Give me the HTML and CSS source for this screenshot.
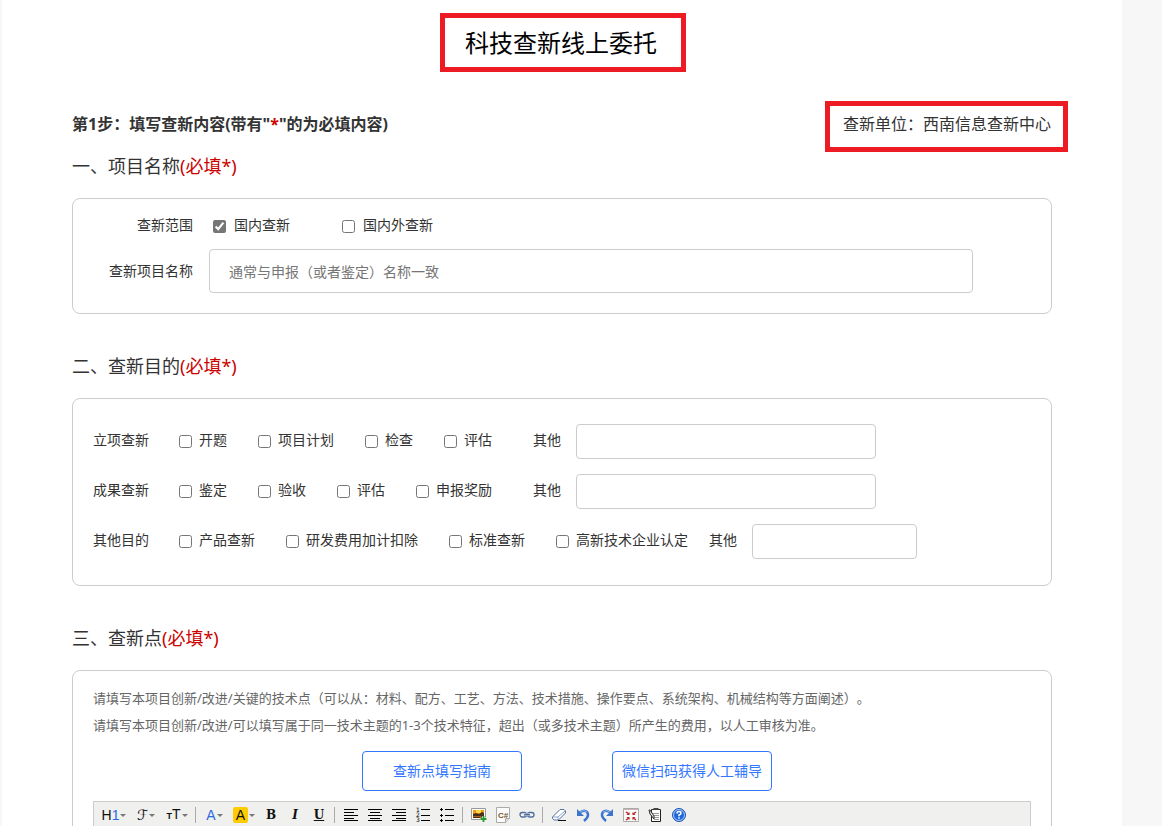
FILE: index.html
```html
<!DOCTYPE html>
<html lang="zh-CN">
<head>
<meta charset="utf-8">
<title>科技查新线上委托</title>
<link rel="stylesheet" href="styles.css">
</head>
<body>
<main class="page">
  <header class="title-row"><h1 class="title">科技查新线上委托</h1></header>
  <div class="step-row">
    <p class="step">第1步：填写查新内容(带有"<span class="required">*</span>"的为必填内容)</p>
    <p class="unit">查新单位：西南信息查新中心</p>
  </div>

  <section class="section">
    <h2 class="heading">一、项目名称<span class="required">(必填*)</span></h2>
    <div class="panel panel-name">
      <div class="name-row scope-row">
        <span class="name-label">查新范围</span>
        <div class="scopes">
          <label class="choice choice-wide"><input class="tick" type="checkbox" checked>国内查新</label>
          <label class="choice choice-wide"><input class="tick" type="checkbox">国内外查新</label>
        </div>
      </div>
      <div class="name-row">
        <label class="name-label" for="project">查新项目名称</label>
        <input class="field project" id="project" type="text" placeholder="通常与申报（或者鉴定）名称一致">
      </div>
    </div>
  </section>

  <section class="section">
    <h2 class="heading">二、查新目的<span class="required">(必填*)</span></h2>
    <div class="panel panel-purpose">
      <div class="purpose-row">
        <span class="purpose-label">立项查新</span>
        <div class="choices">
          <label class="choice"><input class="tick" type="checkbox">开题</label>
          <label class="choice"><input class="tick" type="checkbox">项目计划</label>
          <label class="choice"><input class="tick" type="checkbox">检查</label>
          <label class="choice"><input class="tick" type="checkbox">评估</label>
        </div>
        <label class="other" for="other1">其他</label>
        <input class="field other-field" id="other1" type="text">
      </div>
      <div class="purpose-row">
        <span class="purpose-label">成果查新</span>
        <div class="choices">
          <label class="choice"><input class="tick" type="checkbox">鉴定</label>
          <label class="choice"><input class="tick" type="checkbox">验收</label>
          <label class="choice"><input class="tick" type="checkbox">评估</label>
          <label class="choice"><input class="tick" type="checkbox">申报奖励</label>
        </div>
        <label class="other" for="other2">其他</label>
        <input class="field other-field" id="other2" type="text">
      </div>
      <div class="purpose-row">
        <span class="purpose-label">其他目的</span>
        <div class="choices">
          <label class="choice"><input class="tick" type="checkbox">产品查新</label>
          <label class="choice"><input class="tick" type="checkbox">研发费用加计扣除</label>
          <label class="choice"><input class="tick" type="checkbox">标准查新</label>
          <label class="choice"><input class="tick" type="checkbox">高新技术企业认定</label>
        </div>
        <label class="other other-near" for="other3">其他</label>
        <input class="field other-field other-short" id="other3" type="text">
      </div>
    </div>
  </section>

  <section class="section">
    <h2 class="heading">三、查新点<span class="required">(必填*)</span></h2>
    <div class="panel panel-points">
      <p class="hint">请填写本项目创新/改进/关键的技术点（可以从：材料、配方、工艺、方法、技术措施、操作要点、系统架构、机械结构等方面阐述）。</p>
      <p class="hint">请填写本项目创新/改进/可以填写属于同一技术主题的1-3个技术特征，超出（或多技术主题）所产生的费用，以人工审核为准。</p>
      <div class="actions">
        <button class="action" type="button">查新点填写指南</button>
        <button class="action" type="button">微信扫码获得人工辅导</button>
      </div>
      <div class="toolbar" role="toolbar" aria-label="编辑器">
        <button class="tool tool-wide" type="button"><span class="glyph">H<span class="blue">1</span></span><span class="caret"></span></button>
        <button class="tool tool-wide" type="button"><span class="glyph script">ℱ</span><span class="caret"></span></button>
        <button class="tool tool-size" type="button"><span class="glyph"><span class="small-t">T</span>T</span><span class="caret"></span></button>
        <span class="divider"></span>
        <button class="tool tool-color" type="button"><span class="glyph blue">A</span><span class="caret"></span></button>
        <button class="tool tool-size" type="button"><span class="glyph marker">A</span><span class="caret"></span></button>
        <button class="tool serif" type="button">B</button>
        <button class="tool serif italic" type="button">I</button>
        <button class="tool serif underline" type="button">U</button>
        <span class="divider"></span>
        <button class="tool" type="button" aria-label="左对齐"><svg class="icon" viewBox="0 0 16 16"><path d="M1 2.5h14M1 5.5h10M1 8.5h14M1 11.5h10M1 13.5h14" stroke="#000"/></svg></button>
        <button class="tool" type="button" aria-label="居中"><svg class="icon" viewBox="0 0 16 16"><path d="M1 2.5h14M3 5.5h10M1 8.5h14M3 11.5h10M1 13.5h14" stroke="#000"/></svg></button>
        <button class="tool" type="button" aria-label="右对齐"><svg class="icon" viewBox="0 0 16 16"><path d="M1 2.5h14M5 5.5h10M1 8.5h14M5 11.5h10M1 13.5h14" stroke="#000"/></svg></button>
        <button class="tool" type="button" aria-label="编号"><svg class="icon" viewBox="0 0 16 16"><path d="M6 2.5h9M6 8.5h9M6 13.5h9" stroke="#000"/><g class="digits"><text x="1" y="5">1</text><text x="1" y="10">2</text><text x="1" y="15">3</text></g></svg></button>
        <button class="tool" type="button" aria-label="项目符号"><svg class="icon" viewBox="0 0 16 16"><path d="M6 2.5h9M6 8.5h9M6 13.5h9" stroke="#000"/><path d="M1 2.500h3M2.500 1v3M1 8.500h3M2.500 7v3M1 13.500h3M2.500 12v3" stroke="#000"/></svg></button>
        <span class="divider"></span>
        <button class="tool" type="button" aria-label="图片"><svg class="icon" viewBox="0 0 16 16"><path d="M.5 1.500h14v11H.5z" fill="#fff" stroke="#999"/><path d="M2 3h11v4H2z" fill="#f49a0b"/><path d="M5 3h5v3H5z" fill="#ffd84a"/><path d="M2 7l3-1 3 1 3-2 2 1v5H2z" fill="#47301b"/><path d="M2 9h8v1H2z" fill="#b15f14"/><path d="M12.500 9v6M9.500 12h6" stroke="#fff" stroke-width="3"/><path d="M12.500 9v6M9.500 12h6" stroke="#2c9b2f" stroke-width="2"/></svg></button>
        <button class="tool" type="button" aria-label="代码"><svg class="icon" viewBox="0 0 16 16"><path d="M1.500.5h13v11l-4 4h-9z" fill="#fafafa" stroke="#aaa"/><path d="M14.500 11.500h-4v4" fill="#ddd" stroke="#aaa"/><text class="code" x="3" y="11">C#</text></svg></button>
        <button class="tool" type="button" aria-label="链接"><svg class="icon" viewBox="0 0 16 16" fill="none"><rect x="1" y="5.500" width="6.500" height="4.500" rx="2.200" stroke="#536f9f" stroke-width="1.300"/><rect x="8.500" y="5.500" width="6.500" height="4.500" rx="2.200" stroke="#536f9f" stroke-width="1.300"/><path d="M5 7.800h6" stroke="#dfe6f4" stroke-width="2.500"/><path d="M5 7.800h6" stroke="#435d8c" stroke-width="1.300"/></svg></button>
        <span class="divider"></span>
        <button class="tool" type="button" aria-label="清除格式"><svg class="icon" viewBox="0 0 16 16"><path d="M9 2.500h4l1.500 1.500v2L7.500 13H3l-1.500-1.500V10z" fill="#fff" stroke="#55719e"/><path d="M1.500 10H7l7-6M7 10v3" fill="none" stroke="#8da5ce"/><path d="M7 13.500h8" stroke="#111"/></svg></button>
        <button class="tool" type="button" aria-label="撤销"><svg class="icon" viewBox="0 0 16 16"><path d="M4 6q5-4 8-1 3 4-3 9" fill="none" stroke="#3d74cd" stroke-width="2.500"/><path d="M2 2v7h7z" fill="#3d74cd"/><path d="M5 5q4-3 7 0" fill="none" stroke="#8eb5f0"/></svg></button>
        <button class="tool" type="button" aria-label="重做"><svg class="icon" viewBox="0 0 16 16"><path d="M12 6Q7 2 4 5q-3 4 3 9" fill="none" stroke="#3d74cd" stroke-width="2.500"/><path d="M14 2v7H7z" fill="#3d74cd"/><path d="M11 5Q7 2 4 5" fill="none" stroke="#8eb5f0"/></svg></button>
        <button class="tool" type="button" aria-label="全屏"><svg class="icon" viewBox="0 0 16 16"><path d="M.5 1.500h15v13H.5z" fill="#fafafa" stroke="#aaa"/><path d="M1 2.500h14" stroke="#c9b5b5"/><path d="M3 5l3 2M13 5l-3 2M3 13l3-2M13 13l-3-2" stroke="#b92525" stroke-width="1.500"/><path d="M6.500 5v3h-3zM9.500 5v3h3zM6.500 13v-3h-3zM9.500 13v-3h3z" fill="#b92525"/></svg></button>
        <button class="tool" type="button" aria-label="模板"><svg class="icon" viewBox="0 0 16 16"><path d="M4.500 2.500h9v12h-9z" fill="#fff" stroke="#222"/><path d="M6.500 2h5" stroke="#444" stroke-width="2"/><path d="M6 6.500h6M6 8.500h6M7 10.500h5M7 12.500h5" stroke="#999"/><path d="M2 3l1 4 4 5V9L3 3z" fill="#ddd" stroke="#333"/></svg></button>
        <button class="tool" type="button" aria-label="帮助"><svg class="icon" viewBox="0 0 16 16"><circle cx="8" cy="8" r="6.500" fill="#1f68dc" stroke="#1d55b5"/><circle cx="8" cy="8" r="5.500" fill="none" stroke="#d7e6ff" stroke-width=".8"/><path d="M6 6.500Q6 4.500 8 4.500t2 1.700Q10 7.200 8 8v1.300M8 10.300v1.500" fill="none" stroke="#fff" stroke-width="1.500"/></svg></button>
      </div>
    </div>
  </section>
</main>
</body>
</html>
```
FILE: styles.css
```css
* { box-sizing: border-box; }

body {
  margin: 0;
  height: 100vh;
  overflow: hidden;
  background: #f7f7f7;
  color: #333;
  font: 14px/30px "Noto Sans", "Noto Sans CJK SC", sans-serif;
  text-spacing-trim: space-all;
}

h1, h2, p { margin: 0; font-weight: 400; }

input, button { font: inherit; color: inherit; }

.page {
  min-height: 100vh;
  margin: 0 40px 0 2px;
  padding: 13px 70px 0;
  background: #fff;
}

.title-row { display: flex; justify-content: center; padding-left: 2px; }

.title {
  padding: 0 24px 0 20px;
  border: 5px solid #ed1c24;
  color: #000;
  font-size: 24px;
  line-height: 49px;
}

.step-row {
  display: flex;
  justify-content: space-between;
  align-items: flex-start;
  margin: 29px -16px 0 0;
  font-size: 16px;
  line-height: 36px;
}

.step { padding-top: 5px; font-weight: 700; }

.unit {
  padding: 0 12px 5px 13px;
  border: 5px solid #ed1c24;
}

.required { color: #c00; }

.section + .section { margin-top: 38px; }

.heading {
  margin-bottom: 18px;
  font-size: 18px;
  line-height: 28px;
}

.panel {
  border: 1px solid #ccc;
  border-radius: 8px;
}

.panel-name { padding: 12px 20px 20px; }

.name-row { display: flex; align-items: center; gap: 16px; }

.scope-row { margin-bottom: 10px; line-height: 28px; }

.name-label { flex: 0 0 100px; text-align: right; }

.scopes { display: flex; gap: 52px; padding-left: 4px; }

.choice { display: flex; align-items: center; gap: 7px; white-space: nowrap; }

.choice-wide { gap: 8px; }

.tick { flex: none; width: 13px; height: 13px; margin: 3px 0 0; accent-color: #767676; }

.field {
  min-width: 0;
  border: 1px solid #ccc;
  border-radius: 4px;
  background: #fff;
}

.field::placeholder { color: #757575; }

.project { flex: 1; height: 44px; margin-right: 58px; padding: 0 19px; }

.panel-purpose {
  display: flex;
  flex-direction: column;
  gap: 15px;
  padding: 25px 20px 26px;
}

.purpose-row { display: flex; align-items: flex-start; line-height: 32px; }

.purpose-label { margin-right: 30px; white-space: nowrap; }

.choices { display: flex; gap: 31px; }

.other { margin: 0 15px 0 41px; white-space: nowrap; }

.other-near { margin-left: 21px; }

.other-field { width: 300px; height: 35px; padding: 0 10px; }

.other-short { width: 165px; }

.panel-points { padding: 14px 20px 20px; }

.hint { color: #666; font-size: 13px; line-height: 27px; }

.actions {
  display: flex;
  justify-content: center;
  gap: 90px;
  margin: 12px 0 10px 10px;
}

.action {
  width: 160px;
  height: 40px;
  padding: 0;
  border: 1px solid #3377ff;
  border-radius: 4px;
  background: #fff;
  color: #3377ff;
}

.toolbar {
  display: flex;
  align-items: center;
  padding: 1px 4px;
  border: 1px solid #ccc;
  background: #f0f0ee;
}

.tool {
  display: flex;
  flex: none;
  align-items: center;
  justify-content: center;
  width: 24px;
  height: 24px;
  padding: 0;
  border: 0;
  background: none;
  color: #111;
  font: 14px/16px "Liberation Sans", sans-serif;
}

.tool-wide { width: 32px; }
.tool-size { width: 30px; }
.tool-color { width: 29px; }

.caret {
  margin-left: 1px;
  border: 3px solid transparent;
  border-top-color: #777;
  border-bottom: 0;
}

.blue { color: #2a6ae0; }
.small-t { font-size: 9px; font-weight: 700; }
.script { font: 14px/16px "DejaVu Serif", "DejaVu Sans", serif; }
.marker { width: 15px; border-radius: 2px; background: #fc0; color: #111; }
.serif { font: 700 12px/16px "DejaVu Serif", serif; }
.italic { font-style: italic; }
.underline { text-decoration: underline; }

.divider { flex: none; width: 1px; height: 16px; margin: 0 4px 0 3px; background: #aaa; }

.icon { width: 16px; height: 16px; }
.digits { font: 6px "DejaVu Sans", sans-serif; }
.code { fill: #765325; font: 700 8px "Liberation Sans", sans-serif; }
```
